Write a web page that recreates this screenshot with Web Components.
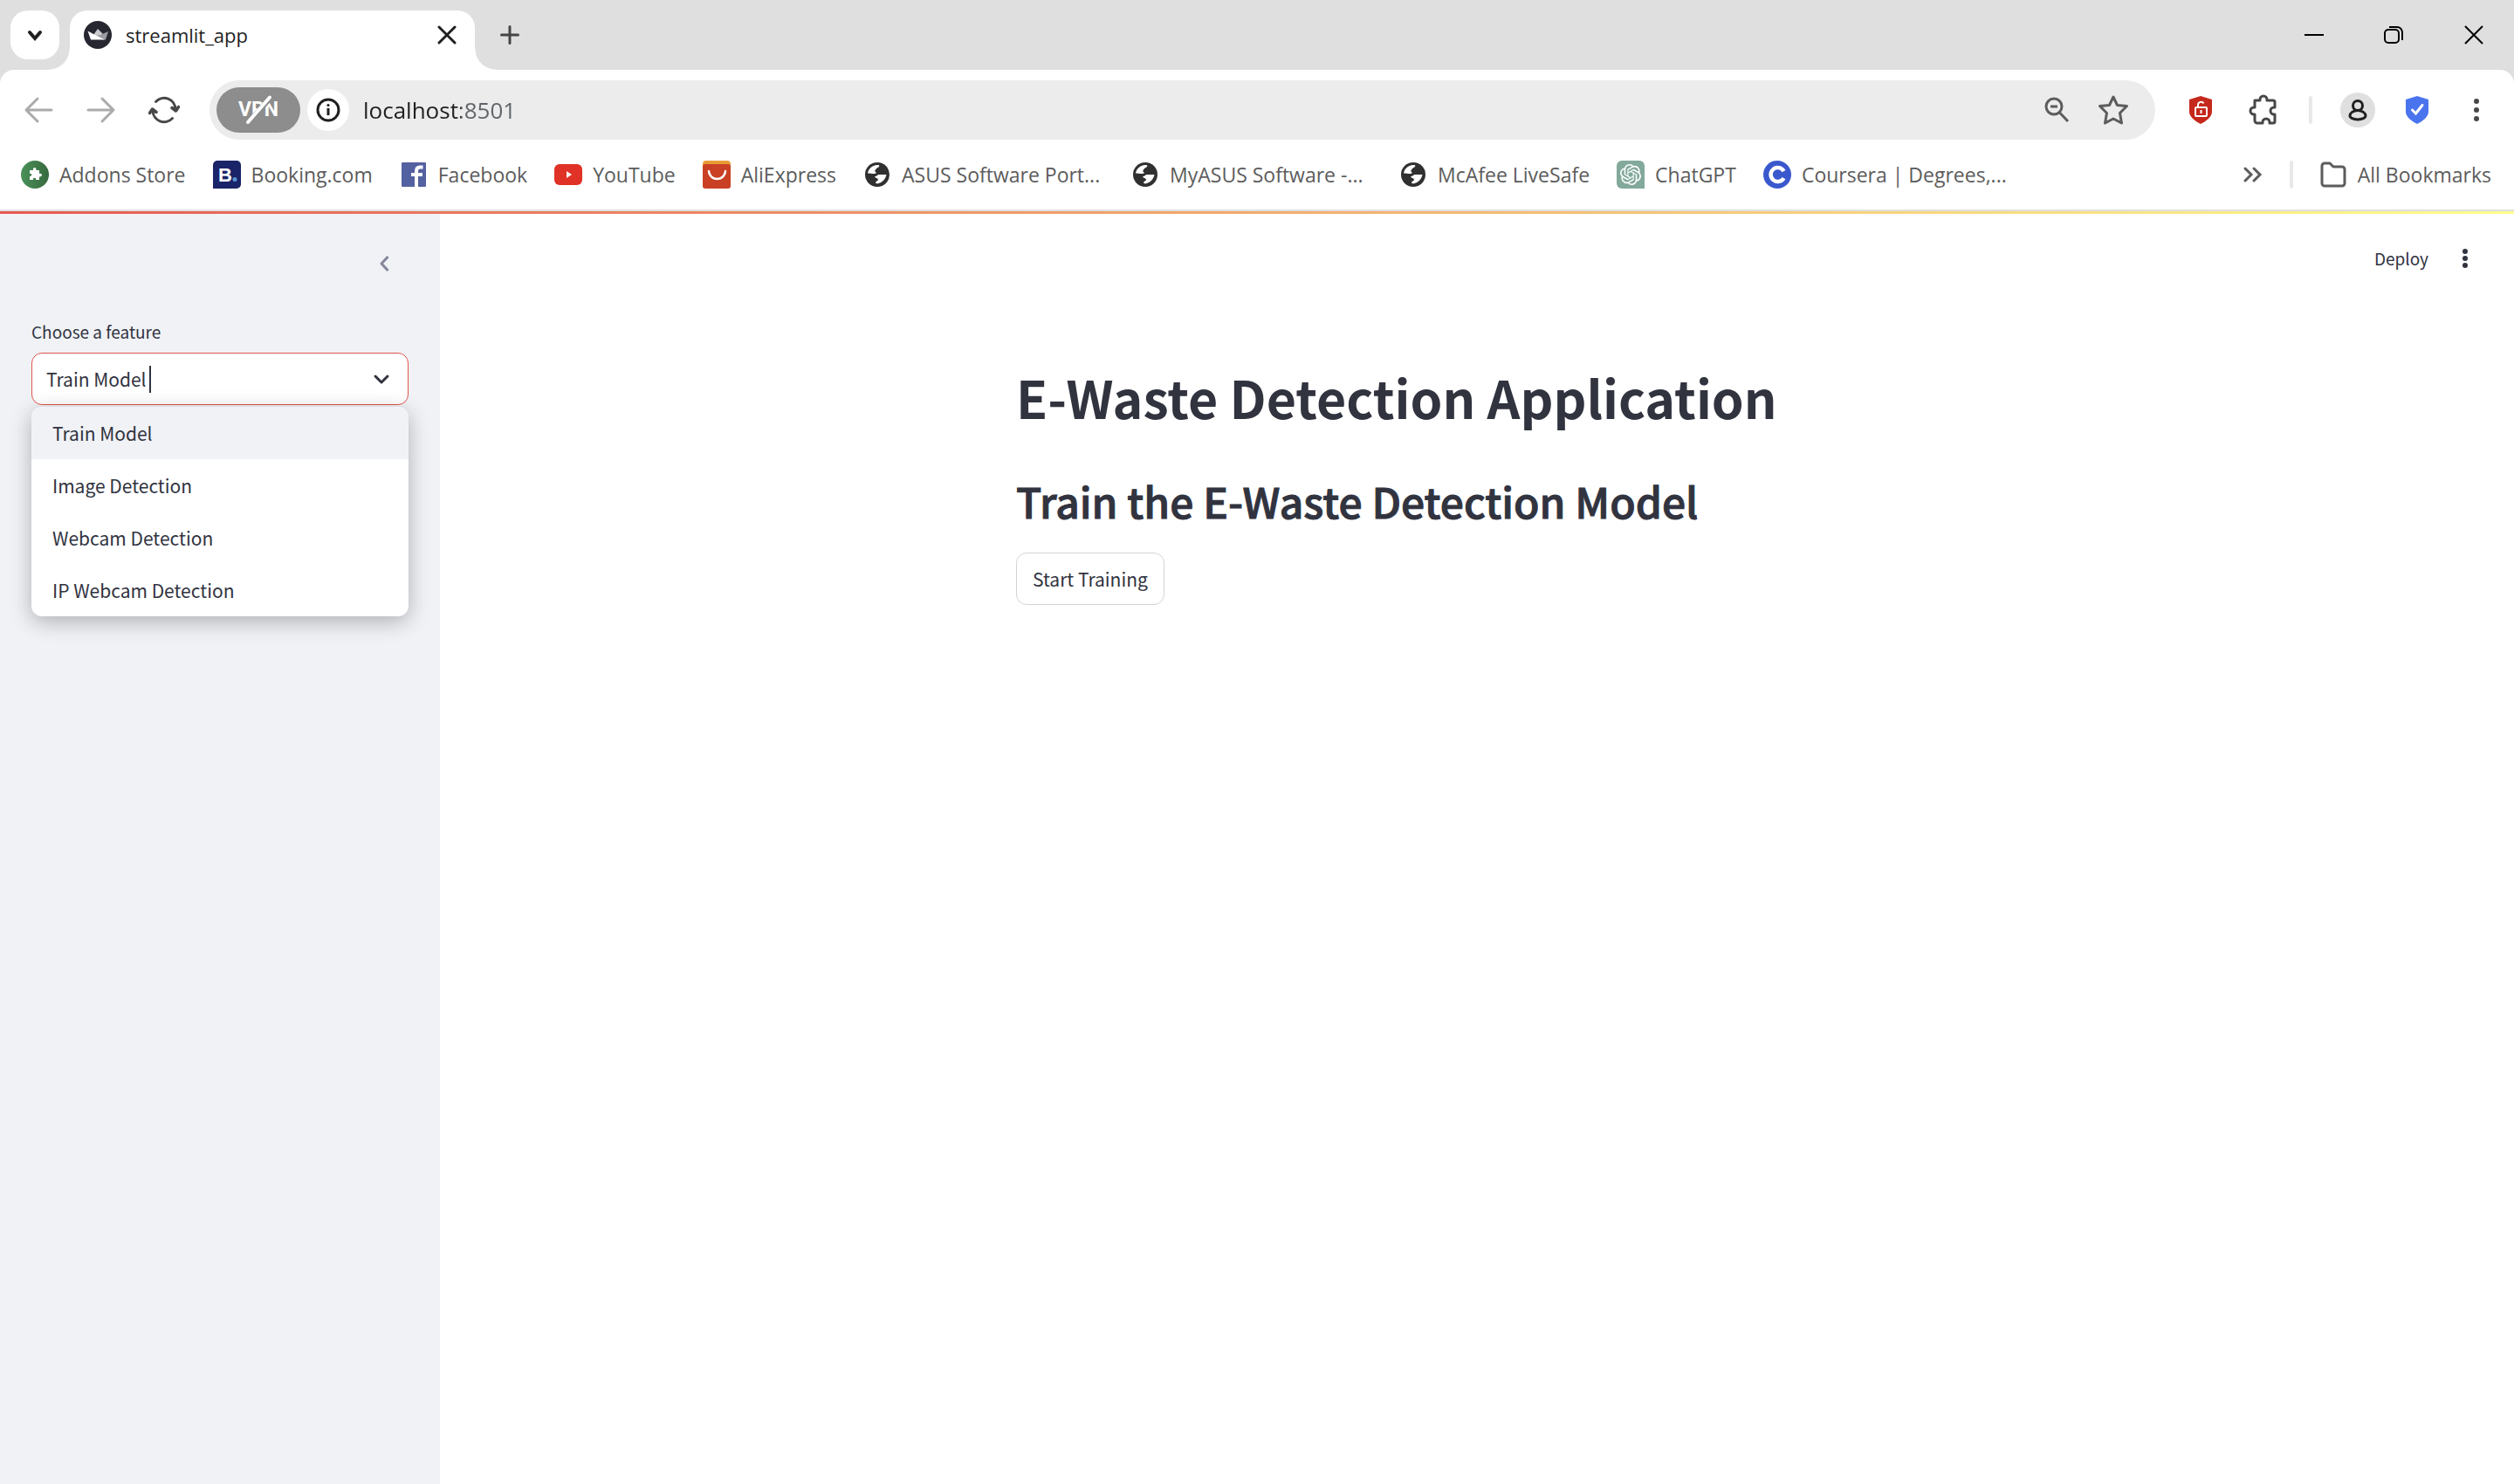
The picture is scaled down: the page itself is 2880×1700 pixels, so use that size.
<!DOCTYPE html>
<html lang="en">
<head>
<meta charset="utf-8">
<title>streamlit_app</title>
<style>
html, body { margin: 0; height: 100%; }
body { font-family: "Open Sans", sans-serif; background: #fff; }
</style>
</head>
<body>
<browser-window>
  <tab-strip slot="tabs" label="streamlit_app"></tab-strip>
  <nav-toolbar slot="toolbar"></nav-toolbar>
  <bookmark-bar slot="bookmarks">
    <bookmark-item icon="addons">Addons Store</bookmark-item>
    <bookmark-item icon="booking">Booking.com</bookmark-item>
    <bookmark-item icon="facebook">Facebook</bookmark-item>
    <bookmark-item icon="youtube">YouTube</bookmark-item>
    <bookmark-item icon="aliexpress">AliExpress</bookmark-item>
    <bookmark-item icon="globe" clipped>ASUS Software Port...</bookmark-item>
    <bookmark-item icon="globe" clipped>MyASUS Software -...</bookmark-item>
    <bookmark-item icon="globe">McAfee LiveSafe</bookmark-item>
    <bookmark-item icon="chatgpt">ChatGPT</bookmark-item>
    <bookmark-item icon="coursera" clipped>Coursera | Degrees,...</bookmark-item>
  </bookmark-bar>
  <streamlit-app>
    <side-bar slot="sidebar">
      <feature-select label="Choose a feature" value="Train Model" options="Train Model,Image Detection,Webcam Detection,IP Webcam Detection"></feature-select>
    </side-bar>
    <app-heading level="1">E-Waste Detection Application</app-heading>
    <app-heading level="2">Train the E-Waste Detection Model</app-heading>
    <st-button>Start Training</st-button>
  </streamlit-app>
</browser-window>

<script>
const SOURCE = '"Noto Sans CJK SC", "Open Sans", sans-serif';

/* name: [width, height, markup] */
const ICONS = {
  chevronDown: [32, 32, '<path d="M10 13l6 7 6-7" fill="none" stroke="#1f1f1f" stroke-width="4" stroke-linecap="round"/>'],
  crown: [32, 32, '<circle cx="16" cy="16" r="16" fill="#262730"/><path d="M16 9l-5 7 9 4 2-5z" fill="#c9c9cd"/><path d="M28 12l-9 4-6 1 9 4.500h3z" fill="#9b9ca3"/><path d="M4.500 11.500L12 15.500 24 21.500H8z" fill="#fff"/>'],
  close: [32, 32, '<path d="M7 7l18 18M25 7L7 25" stroke="#1f1f1f" stroke-width="3" stroke-linecap="round"/>'],
  plus: [32, 32, '<path d="M16 6.500v19M6.500 16h19" stroke="#454545" stroke-width="3" stroke-linecap="round"/>'],
  winMin: [24, 24, '<path d="M2 12h22" stroke="#000" stroke-width="2"/>'],
  winRestore: [24, 24, '<rect x="2" y="6" width="16" height="15" rx="4" fill="none" stroke="#000" stroke-width="2"/><path d="M7 3h9a6 6 0 0 1 6 6v9" fill="none" stroke="#000" stroke-width="2"/>'],
  winClose: [24, 24, '<path d="M2 2l20 20M22 2L2 22" stroke="#000" stroke-width="2"/>'],
  back: [36, 36, '<path d="M33 18H4M17 5L4 18l13 13" fill="none" stroke="#ababab" stroke-width="3" stroke-linecap="round" stroke-linejoin="round"/>'],
  forward: [36, 36, '<path d="M3 18h29M19 5l13 13-13 13" fill="none" stroke="#ababab" stroke-width="3" stroke-linecap="round" stroke-linejoin="round"/>'],
  reload: [36, 36, '<path d="M8.500 8.500A13 13 0 0 1 31 17M27.500 27.500A13 13 0 0 1 5 19" fill="none" stroke="#474747" stroke-width="3" stroke-linecap="round"/><path d="M27 15.500l4.500 3.500 3-4.500M1.500 21.500l3-4.500 4.500 3.500" fill="none" stroke="#474747" stroke-width="3.500" stroke-linecap="round" stroke-linejoin="round"/>'],
  vpnSlash: [36, 36, '<path d="M31 5L7 32" stroke="#8d8d8d" stroke-width="6"/><path d="M31 3.500L6 32" stroke="#fff" stroke-width="4" stroke-linecap="round"/>'],
  info: [28, 28, '<circle cx="14" cy="14" r="12" fill="none" stroke="#1f1f1f" stroke-width="3"/><path d="M14 12v8" stroke="#1f1f1f" stroke-width="3"/><circle cx="14" cy="8.500" r="1.600" fill="#1f1f1f"/>'],
  zoomOut: [32, 32, '<circle cx="12" cy="12" r="9" fill="none" stroke="#5c5c5c" stroke-width="3"/><path d="M8 12h8M18.500 19l9.500 10" stroke="#5c5c5c" stroke-width="3"/>'],
  star: [36, 36, '<path d="M18 3l4.500 9.500 11 1-8 8 2 11.500L18 28l-9.500 5 2-11.500-8-8 11-1z" fill="none" stroke="#5c5c5c" stroke-width="3" stroke-linejoin="round"/>'],
  redShield: [32, 36, '<path d="M16 2l13 4v14c0 6-7 11-13 14C10 31 3 26 3 20V6z" fill="#c5281c"/><rect x="10" y="15" width="13" height="10" rx="1" fill="none" stroke="#fff" stroke-width="2"/><path d="M13 15v-3a3.500 3.500 0 0 1 6.500-1.500M16.500 18v4" fill="none" stroke="#fff" stroke-width="2"/>'],
  puzzle: [36, 36, '<path d="M8 7h6V6a4 4 0 0 1 8 0v1h7a2 2 0 0 1 2 2v6h-1a4 4 0 0 0 0 8h1v8a2 2 0 0 1-2 2h-4v-1a4 4 0 0 0-8 0v1h-6a3 3 0 0 1-3-3v-7H7a4 4 0 0 1 0-8h1z" fill="none" stroke="#474747" stroke-width="3" stroke-linejoin="round"/>'],
  profile: [40, 40, '<circle cx="20" cy="20" r="20" fill="#dfdfdf"/><circle cx="20" cy="15" r="5.500" fill="none" stroke="#1f1f1f" stroke-width="3"/><path d="M20 20.500c-5 0-9 3-9 6 0 2.500 4 4.500 9 4.500s9-2 9-4.500c0-3-4-6-9-6z" fill="none" stroke="#1f1f1f" stroke-width="3"/>'],
  blueShield: [32, 36, '<path d="M16 2l13 4v14c0 6-7 11-13 14C10 31 3 26 3 20V6z" fill="#4a74ee"/><path d="M10.500 18l4 4L22 12.500" fill="none" stroke="#fff" stroke-width="3" stroke-linecap="round"/>'],
  kebab: [32, 32, '<g fill="#474747"><circle cx="16" cy="6" r="3"/><circle cx="16" cy="16" r="3"/><circle cx="16" cy="26" r="3"/></g>'],
  more: [24, 24, '<path d="M3 5l7 7-7 7M13 5l7 7-7 7" fill="none" stroke="#5c5c5c" stroke-width="3" stroke-linecap="round"/>'],
  folder: [32, 32, '<path d="M3 6a3 3 0 0 1 3-3h6l4 4h10a3 3 0 0 1 3 3v16a3 3 0 0 1-3 3H6a3 3 0 0 1-3-3z" fill="none" stroke="#5c5c5c" stroke-width="3" stroke-linejoin="round"/>'],
  addons: [32, 32, '<defs><linearGradient id="ag"><stop offset="0" stop-color="#4a9159"/><stop offset="1" stop-color="#37693f"/></linearGradient></defs><circle cx="16" cy="16" r="16" fill="url(#ag)"/><path d="M10 11h4c-1-4 4-4 3.500 0H21v4c4-1 4 4 0 3.500V22h-4c1-3-4-3-3 0h-4v-4c3 .500 3-4 0-3z" fill="#fff"/>'],
  booking: [32, 32, '<path d="M0 5a5 5 0 0 1 5-5h22a5 5 0 0 1 5 5v22a5 5 0 0 1-5 5H0z" fill="#1a2468"/><text x="6" y="24" font-family="Liberation Sans, sans-serif" font-weight="700" font-size="22" fill="#fff">B</text><circle cx="25" cy="21.500" r="2.500" fill="#5a96d6"/>'],
  facebook: [32, 32, '<rect x="2" y="2" width="28" height="28" rx="1" fill="#5461a0"/><path d="M19 30V12c0-3 1.500-4.500 4-4.500h3.500M13 16h13" fill="none" stroke="#fff" stroke-width="4"/>'],
  youtube: [32, 32, '<rect x="0" y="4" width="32" height="24" rx="6" fill="#e03226"/><path d="M14 12v8l6-4z" fill="#fff"/>'],
  aliexpress: [32, 32, '<rect width="32" height="20" rx="4" fill="#e89c38"/><path d="M0 7a3 3 0 0 1 3-3h26a3 3 0 0 1 3 3v22a3 3 0 0 1-3 3H3a3 3 0 0 1-3-3z" fill="#c94024"/><path d="M7 12c1 12 18 12 19 0" fill="none" stroke="#fff" stroke-width="2.500" stroke-linecap="round"/>'],
  globe: [32, 32, '<circle cx="16" cy="16" r="14" fill="#303030"/><path d="M5 14.500C6 9 10 5.500 16 5c2 0 3 .500 2 2l-3 2c-1 1-1 2-2 3l2 2c-2 2-6 .500-10 .500z" fill="#fff"/><path d="M17 16h9.500c-1 5-4 9-10.500 10.500l-2-1c0-2 3-2 3-4-1-2-3-1-4-3 1-1 3-1 4-2.500z" fill="#fff"/>'],
  chatgpt: [32, 32, '<path d="M0 6a6 6 0 0 1 6-6h20a6 6 0 0 1 6 6v26H6a6 6 0 0 1-6-6z" fill="#83a99b"/><path transform="translate(4 4)" fill="#fff" d="M22.2819 9.8211a5.9847 5.9847 0 0 0-.5157-4.9108 6.0462 6.0462 0 0 0-6.5098-2.9A6.0651 6.0651 0 0 0 4.9807 4.1818a5.9847 5.9847 0 0 0-3.9977 2.9 6.0462 6.0462 0 0 0 .7427 7.0966 5.98 5.98 0 0 0 .511 4.9107 6.051 6.051 0 0 0 6.5146 2.9001A5.9847 5.9847 0 0 0 13.2599 24a6.0557 6.0557 0 0 0 5.7718-4.2058 5.9894 5.9894 0 0 0 3.9977-2.9001 6.0557 6.0557 0 0 0-.7475-7.0729zm-9.022 12.6081a4.4755 4.4755 0 0 1-2.8764-1.0408l.1419-.0804 4.7783-2.7582a.7948.7948 0 0 0 .3927-.6813v-6.7369l2.02 1.1686a.071.071 0 0 1 .038.0615v5.5826a4.504 4.504 0 0 1-4.4945 4.4944zm-9.6607-4.1254a4.4708 4.4708 0 0 1-.5346-3.0137l.142.0852 4.783 2.7582a.7712.7712 0 0 0 .7806 0l5.8428-3.3685v2.3324a.0804.0804 0 0 1-.0332.0615L9.74 19.9502a4.4992 4.4992 0 0 1-6.1408-1.6464zM2.3408 7.8956a4.485 4.485 0 0 1 2.3655-1.9728V11.6a.7664.7664 0 0 0 .3879.6765l5.8144 3.3543-2.0201 1.1685a.0757.0757 0 0 1-.071 0l-4.8303-2.7865A4.504 4.504 0 0 1 2.3408 7.872zm16.5963 3.8558L13.1038 8.364 15.1192 7.2a.0757.0757 0 0 1 .071 0l4.8303 2.7913a4.4944 4.4944 0 0 1-.6765 8.1042v-5.6772a.79.79 0 0 0-.407-.667zm2.0107-3.0231l-.142-.0852-4.7735-2.7818a.7759.7759 0 0 0-.7854 0L9.409 9.2297V6.8974a.0662.0662 0 0 1 .0284-.0615l4.8303-2.7866a4.4992 4.4992 0 0 1 6.6802 4.66zM8.3065 12.863l-2.02-1.1638a.0804.0804 0 0 1-.038-.0567V6.0742a4.4992 4.4992 0 0 1 7.3757-3.4537l-.142.0805L8.704 5.459a.7948.7948 0 0 0-.3927.6813zm1.0976-2.3654l2.602-1.4998 2.6069 1.4998v2.9994l-2.5974 1.4997-2.6067-1.4997Z"/>'],
  coursera: [32, 32, '<circle cx="16" cy="16" r="16" fill="#3a58ce"/><path d="M23.500 12a8 8 0 1 0 0 8" fill="none" stroke="#fff" stroke-width="4.500"/>'],
  collapse: [24, 24, '<path d="M15.500 4L8 12l7.500 8" fill="none" stroke="#83869a" stroke-width="3" stroke-linejoin="round"/>'],
  caretDown: [24, 24, '<path d="M5 9l7 7 7-7" fill="none" stroke="#31333f" stroke-width="3" stroke-linejoin="round" stroke-linecap="round"/>'],
  appMenu: [24, 24, '<g fill="#31333f"><circle cx="12" cy="5" r="3"/><circle cx="12" cy="13" r="3"/><circle cx="12" cy="21" r="3"/></g>']
};

function define(name, render) {
  customElements.define(name, class extends HTMLElement {
    connectedCallback() {
      if (this.shadowRoot) return;
      this.attachShadow({ mode: 'open' }).innerHTML = render(this);
    }
  });
}

const BUTTON = `
  button { display: flex; align-items: center; justify-content: center; border: 0; padding: 0; margin: 0; background: none; font: inherit; color: inherit; flex: none; }
`;

define('ui-icon', el => {
  const [w, h, body] = ICONS[el.getAttribute('name')];
  return `<style>:host { display: block; flex: none; } svg { display: block; }</style>
    <svg width="${w}" height="${h}" viewBox="0 0 ${w} ${h}" aria-hidden="true">${body}</svg>`;
});

define('browser-window', () => `
  <style>
    :host { display: flex; flex-direction: column; min-height: 100%; background: #fff; }
    header { background: #dfdfdf; }
    .bars { background: #fff; border-radius: 16px 16px 0 0; border-bottom: 2px solid #dfdfdf; }
  </style>
  <header>
    <slot name="tabs"></slot>
    <div class="bars"><slot name="toolbar"></slot><slot name="bookmarks"></slot></div>
  </header>
  <slot></slot>`);

define('tab-strip', el => `
  <style>
    ${BUTTON}
    :host { display: flex; height: 80px; align-items: flex-start; }
    .search { width: 56px; height: 56px; margin: 12px 12px 0; border-radius: 20px; background: #fff; }
    .tab { position: relative; display: flex; align-items: center; box-sizing: border-box; width: 464px; height: 68px; margin-top: 12px; padding: 0 16px 12px; border-radius: 20px 20px 0 0; background: #fff; font-size: 22px; color: #1f1f1f; }
    .tab::before, .tab::after { content: ""; position: absolute; bottom: 0; width: 24px; height: 24px; }
    .tab::before { right: 100%; background: radial-gradient(circle at 0 0, transparent 23px, #fff 24px); }
    .tab::after { left: 100%; background: radial-gradient(circle at 100% 0, transparent 23px, #fff 24px); }
    .title { flex: 1; margin-left: 16px; line-height: 32px; }
    .new { width: 80px; height: 56px; margin-top: 12px; }
    .drag { flex: 1; }
    .win { width: 92px; height: 80px; }
  </style>
  <button class="search" aria-label="Search tabs"><ui-icon name="chevronDown"></ui-icon></button>
  <div class="tab" role="tab" aria-selected="true">
    <ui-icon name="crown"></ui-icon><span class="title">${el.getAttribute('label')}</span>
    <button aria-label="Close tab"><ui-icon name="close"></ui-icon></button>
  </div>
  <button class="new" aria-label="New tab"><ui-icon name="plus"></ui-icon></button>
  <div class="drag"></div>
  <button class="win" aria-label="Minimize"><ui-icon name="winMin"></ui-icon></button>
  <button class="win" aria-label="Restore"><ui-icon name="winRestore"></ui-icon></button>
  <button class="win" aria-label="Close"><ui-icon name="winClose"></ui-icon></button>`);

define('nav-toolbar', () => `
  <style>
    ${BUTTON}
    :host { display: flex; align-items: center; height: 92px; padding: 0 15px 0 16px; }
    .tools { display: flex; align-items: center; gap: 16px; }
    .right { gap: 12px; }
    .tools button, .act { width: 56px; height: 56px; }
    .box { flex: 1; display: flex; align-items: center; height: 68px; margin: 0 24px; padding: 0 20px 0 8px; box-sizing: border-box; border-radius: 34px; background: #ececec; gap: 8px; }
    .vpn { display: grid; width: 96px; height: 52px; border-radius: 26px; background: #8d8d8d; color: #fff; font: 700 23px/28px Roboto, sans-serif; }
    .vpn > * { grid-area: 1 / 1; place-self: center; }
    .info { width: 48px; height: 48px; border-radius: 24px; background: #fff; }
    input { flex: 1; min-width: 0; height: 48px; margin-left: 8px; padding: 0; border: 0; outline: 0; font: 26px "Open Sans", sans-serif; color: #1f1f1f; background: linear-gradient(90deg, #1f1f1f 112px, #5f6368 112px); -webkit-background-clip: text; background-clip: text; -webkit-text-fill-color: transparent; }
    .sep { width: 4px; height: 32px; margin: 0 12px 0 24px; border-radius: 2px; background: #e8e8e8; }
  </style>
  <div class="tools">
    <button aria-label="Back"><ui-icon name="back"></ui-icon></button>
    <button aria-label="Forward"><ui-icon name="forward"></ui-icon></button>
    <button aria-label="Reload"><ui-icon name="reload"></ui-icon></button>
  </div>
  <div class="box">
    <button class="vpn"><span>VPN</span><ui-icon name="vpnSlash"></ui-icon></button>
    <button class="info" aria-label="Site information"><ui-icon name="info"></ui-icon></button>
    <input type="text" aria-label="Address" value="localhost:8501">
    <button class="act" aria-label="Zoom"><ui-icon name="zoomOut"></ui-icon></button>
    <button class="act" aria-label="Bookmark this page"><ui-icon name="star"></ui-icon></button>
  </div>
  <div class="tools"><button aria-label="Blocker"><ui-icon name="redShield"></ui-icon></button>
    <button aria-label="Extensions"><ui-icon name="puzzle"></ui-icon></button></div>
  <div class="tools right"><span class="sep"></span>
    <button aria-label="Profile"><ui-icon name="profile"></ui-icon></button>
    <button aria-label="Protection"><ui-icon name="blueShield"></ui-icon></button>
    <button aria-label="Menu"><ui-icon name="kebab"></ui-icon></button></div>`);

define('bookmark-bar', () => `
  <style>
    ${BUTTON}
    :host { display: flex; align-items: center; height: 56px; padding: 0 26px 12px 24px; }
    nav { flex: 1; display: flex; gap: 31px; min-width: 0; }
    .end { display: flex; align-items: center; gap: 30px; }
    .sep { width: 4px; height: 32px; border-radius: 2px; background: #e8e8e8; }
  </style>
  <nav aria-label="Bookmarks"><slot></slot></nav>
  <div class="end">
    <button aria-label="More bookmarks"><ui-icon name="more"></ui-icon></button>
    <span class="sep"></span>
    <bookmark-item icon="folder">All Bookmarks</bookmark-item>
  </div>`);

define('bookmark-item', el => `
  <style>
    :host { display: block; flex: none; }
    a { display: flex; align-items: center; gap: 12px; color: #5c5c5c; font-size: 23px; line-height: 32px; text-decoration: none; white-space: nowrap; }
    :host([clipped]) span { width: 232px; }
  </style>
  <a href="#"><ui-icon name="${el.getAttribute('icon')}"></ui-icon><span><slot></slot></span></a>`);

define('streamlit-app', () => `
  <style>
    ${BUTTON}
    :host { flex: 1; display: flex; flex-direction: column; color: #31333f; font-family: ${SOURCE}; }
    .decor { height: 3px; background: linear-gradient(90deg, #e65a52, #fdfd8c); }
    .cols { flex: 1; display: flex; }
    .body { flex: 1; display: flex; flex-direction: column; }
    .bar { display: flex; justify-content: flex-end; align-items: center; height: 100px; padding-right: 44px; gap: 30px; font-size: 19px; }
    main { width: 1056px; margin: 0 auto; padding-top: 70px; }
  </style>
  <div class="decor"></div>
  <div class="cols">
    <slot name="sidebar"></slot>
    <div class="body">
      <div class="bar"><button>Deploy</button><button aria-label="Main menu"><ui-icon name="appMenu"></ui-icon></button></div>
      <main><slot></slot></main>
    </div>
  </div>`);

define('side-bar', () => `
  <style>
    ${BUTTON}
    :host { display: block; width: 504px; box-sizing: border-box; padding: 0 36px; background: #f0f2f6; }
    .top { display: flex; justify-content: flex-end; padding: 45px 15px 52px 0; }
  </style>
  <div class="top"><button aria-label="Collapse sidebar"><ui-icon name="collapse"></ui-icon></button></div>
  <slot></slot>`);

define('feature-select', el => `
  <style>
    :host { display: block; position: relative; }
    label { display: block; font-size: 19px; line-height: 28px; margin-bottom: 10px; }
    .field { display: flex; align-items: center; height: 60px; box-sizing: border-box; padding: 0 18px 0 16px; border: 1px solid #e0544d; border-radius: 12px; background: #fff; }
    input { field-sizing: content; border: 0; outline: 0; padding: 0; background: none; color: inherit; font: 21px/32px ${SOURCE}; }
    .caret { width: 2px; height: 31px; margin-left: 3px; background: #31333f; }
    .space { flex: 1; }
    ul { position: absolute; left: 0; right: 0; top: 100%; margin: 2px 0 0; padding: 0; list-style: none; border-radius: 12px; overflow: hidden; background: #fff; box-shadow: 0 6px 24px rgba(0, 0, 0, .28); }
    li { padding: 0 24px; font-size: 21px; line-height: 60px; }
    li[aria-selected="true"] { background: #f0f2f6; }
  </style>
  <label for="box">${el.getAttribute('label')}</label>
  <div class="field">
    <input id="box" type="text" role="combobox" aria-expanded="true" aria-controls="list" value="${el.getAttribute('value')}">
    <span class="caret"></span><span class="space"></span><ui-icon name="caretDown"></ui-icon>
  </div>
  <ul id="list" role="listbox">${el.getAttribute('options').split(',').map(o =>
    `<li role="option" aria-selected="${o === el.getAttribute('value')}">${o}</li>`).join('')}</ul>`);

define('app-heading', el => {
  const n = el.getAttribute('level');
  return `<style>
    :host { display: block; }
    h1, h2 { margin: 0; white-space: nowrap; }
    h1 { font-size: 59px; line-height: 80px; font-weight: 700; padding-bottom: 46px; }
    h2 { font-size: 48px; line-height: 64px; font-weight: 500; padding-bottom: 28px; -webkit-text-stroke: 1px #31333f; }
  </style><h${n}><slot></slot></h${n}>`;
});

define('st-button', () => `
  <style>
    :host { display: block; }
    button { height: 60px; padding: 0 18px; border: 1px solid #d3d4d8; border-radius: 12px; background: #fff; color: #31333f; font: 21px/32px ${SOURCE}; }
  </style>
  <button><slot></slot></button>`);
</script>
</body>
</html>
